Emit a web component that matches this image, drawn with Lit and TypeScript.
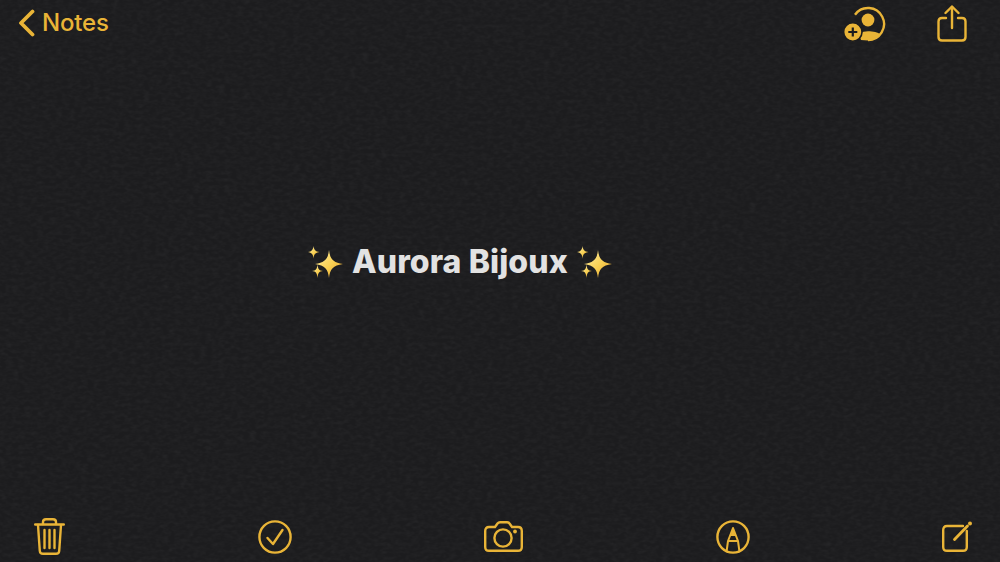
import { css, html, LitElement } from 'lit'
import { customElement } from 'lit/decorators.js'

// sparkle emoji, one per side of the title
const sparkles = (id: string) => html`
   <svg class="sparkles" width="35" height="32" viewBox="0 0 35 32">
      <defs>
         <linearGradient id=${id} x1="0" y1="0" x2="1" y2="1">
            <stop offset="0" stop-color="#fff0a8"></stop>
            <stop offset="0.55" stop-color="#f8cf52"></stop>
            <stop offset="1" stop-color="#e39a26"></stop>
         </linearGradient>
      </defs>
      <path fill="url(#${id})" d="M21 4 C22 13 25 16.500 35 18 C25 19.500 22 23 21 32 C20 23 17 19.500 7 18 C17 16.500 20 13 21 4 Z"></path>
      <path fill="url(#${id})" d="M5.500 0 C6 4 7.500 5.500 11.500 6 C7.500 6.500 6 8 5.500 12.500 C5 8 3.500 6.500 0 6 C3.500 5.500 5 4 5.500 0 Z"></path>
      <path fill="url(#${id})" d="M9.500 18.500 C10 23 11 24.500 15 25 C11 25.500 10 27 9.500 32 C9 27 8 25.500 4 25 C8 24.500 9 23 9.500 18.500 Z"></path>
   </svg>`

const chevron = html`
   <svg width="17" height="28" viewBox="0 0 17 28" fill="none" stroke="currentColor" stroke-width="3.800" stroke-linecap="round" stroke-linejoin="round">
      <path d="M14.500 2.500 L3 14 L14.500 25.500"></path>
   </svg>`

const addPerson = html`
   <svg width="42" height="38" viewBox="0 0 42 38" fill="none" stroke="currentColor" stroke-width="2.400">
      <path d="M11 9.700 A16 16 0 1 1 24 35"></path>
      <circle cx="24" cy="15" r="6.400" fill="currentColor" stroke="none"></circle>
      <path d="M17 35 L15 29 C18 27 21 26.300 24 26.300 C29 26.300 34 27.300 36.500 29.500 A16 16 0 0 1 24 35.500 Z" fill="currentColor" stroke="none"></path>
      <circle cx="8.800" cy="27" r="9.200" fill="currentColor" stroke="#1c1c1e" stroke-width="1.600"></circle>
      <path d="M8.800 22.500 V31.500 M4.300 27 H13.300" stroke="#1c1c1e" stroke-width="2.200"></path>
   </svg>`

const share = html`
   <svg width="30" height="37" viewBox="0 0 30 37" fill="none" stroke="currentColor" stroke-width="2.400" stroke-linecap="round" stroke-linejoin="round">
      <path d="M9 13 H5 Q1.500 13 1.500 16.500 V32 Q1.500 35.500 5 35.500 H25 Q28.500 35.500 28.500 32 V16.500 Q28.500 13 25 13 H21"></path>
      <path d="M15 23 V2"></path>
      <path d="M8.500 8 L15 1.500 L21.500 8"></path>
   </svg>`

const trash = html`
   <svg width="31" height="37" viewBox="0 0 31 37" fill="none" stroke="currentColor" stroke-width="2.400" stroke-linecap="round" stroke-linejoin="round">
      <path d="M1.200 6.500 H29.800"></path>
      <path d="M9 6 V4 Q9 1.200 12 1.200 H19 Q22 1.200 22 4 V6"></path>
      <path d="M4 7 L5.800 33 Q6 35.800 9 35.800 H22 Q25 35.800 25.200 33 L27 7"></path>
      <path d="M10.500 12 V30 M15.500 12 V30 M20.500 12 V30"></path>
   </svg>`

const check = html`
   <svg width="34" height="34" viewBox="0 0 34 34" fill="none" stroke="currentColor" stroke-width="2.400" stroke-linecap="round" stroke-linejoin="round">
      <circle cx="17" cy="17" r="15.600"></circle>
      <path d="M9.500 18 L15 24 L24.500 10"></path>
   </svg>`

const camera = html`
   <svg width="39" height="31" viewBox="0 0 39 31" fill="none" stroke="currentColor" stroke-width="2.400" stroke-linejoin="round">
      <path d="M5 6 H11 L13.500 2.500 Q14.500 1.200 16 1.200 H23 Q24.500 1.200 25.500 2.500 L28 6 H34 Q37.800 6 37.800 10 V26 Q37.800 29.800 34 29.800 H5 Q1.200 29.800 1.200 26 V10 Q1.200 6 5 6 Z"></path>
      <circle cx="19" cy="17" r="8.600"></circle>
      <circle cx="31" cy="10.500" r="1.900" fill="currentColor" stroke="none"></circle>
   </svg>`

const markup = html`
   <svg width="34" height="34" viewBox="0 0 34 34" fill="none" stroke="currentColor" stroke-width="2.400" stroke-linejoin="round">
      <circle cx="17" cy="17" r="15.600"></circle>
      <path d="M10.500 32 L12 21 L17 8 L22 21 L23.500 32" stroke-width="2"></path>
      <path d="M14.500 16 L17 8 L19.500 16 Z" fill="currentColor" stroke="none"></path>
      <path d="M12 21 H22" stroke-width="2"></path>
   </svg>`

const compose = html`
   <svg width="30" height="31" viewBox="0 0 30 31" fill="none" stroke="currentColor" stroke-width="2.400" stroke-linecap="round" stroke-linejoin="round">
      <path d="M24.800 10 V26 Q24.800 29.800 21 29.800 H5 Q1.200 29.800 1.200 26 V9 Q1.200 5 5 5 H21"></path>
      <path d="M12.500 18.500 L25.500 5" stroke-width="2.800"></path>
      <circle cx="28" cy="2.500" r="2" fill="currentColor" stroke="none"></circle>
   </svg>`

@customElement('app-root')
export class AppRoot extends LitElement {

   render() {
      return html`
         <svg class="paper" width="1000" height="562">
            <filter id="grain" x="0" y="0" width="100%" height="100%">
               <feTurbulence type="fractalNoise" baseFrequency="0.16 0.28" numOctaves="2" seed="4"></feTurbulence>
               <feColorMatrix type="matrix" values="0 0 0 0 1  0 0 0 0 1  0 0 0 0 1  0.6 0.6 0 0 -0.45"></feColorMatrix>
            </filter>
            <rect width="1000" height="562" filter="url(#grain)" opacity="0.07"></rect>
         </svg>

         <header class="top">
            <div class="back">
               ${chevron}
               <span>Notes</span>
            </div>
            <div class="actions">
               ${addPerson}
               ${share}
            </div>
         </header>

         <main class="note">
            ${sparkles('spark-a')}
            <h1>Aurora Bijoux</h1>
            ${sparkles('spark-b')}
         </main>

         <footer class="bottom">
            ${trash}
            ${check}
            ${camera}
            ${markup}
            ${compose}
         </footer>`
   }

   static styles = css`
    :host {
      display: grid;
      grid-template-rows: 46px 1fr 46px;
      position: relative;
      width: 1000px;
      height: 562px;
      overflow: hidden;
      background: #1c1c1e;
      color: #e9b437;
      font-family: Inter, "Liberation Sans", sans-serif;
    }

    .paper {
      position: absolute;
      inset: 0;
    }

    .top, .note, .bottom {
      position: relative;
      display: flex;
      align-items: center;
    }

    .top {
      align-items: flex-start;
      justify-content: space-between;
      padding: 5px 33px 0 18px;
    }

    .back {
      display: flex;
      align-items: center;
      gap: 7px;
      padding-top: 4px;
      font-size: 24px;
      font-weight: 500;
      line-height: 28px;
      letter-spacing: -0.2px;
    }

    .actions {
      display: flex;
      align-items: flex-start;
      gap: 51px;
    }

    .note {
      gap: 9px;
      padding: 0 0 38px 308px;
    }

    .note h1 {
      margin: 0;
      font-size: 32px;
      line-height: 36px;
      font-weight: 800;
      letter-spacing: 0.1px;
      color: #e2e2e2;
    }

    .bottom {
      justify-content: space-between;
      padding: 0 28px 0 34px;
      margin-top: -5px;
    }
   `
}

declare global {
   interface HTMLElementTagNameMap {
      'app-root': AppRoot
   }
}
